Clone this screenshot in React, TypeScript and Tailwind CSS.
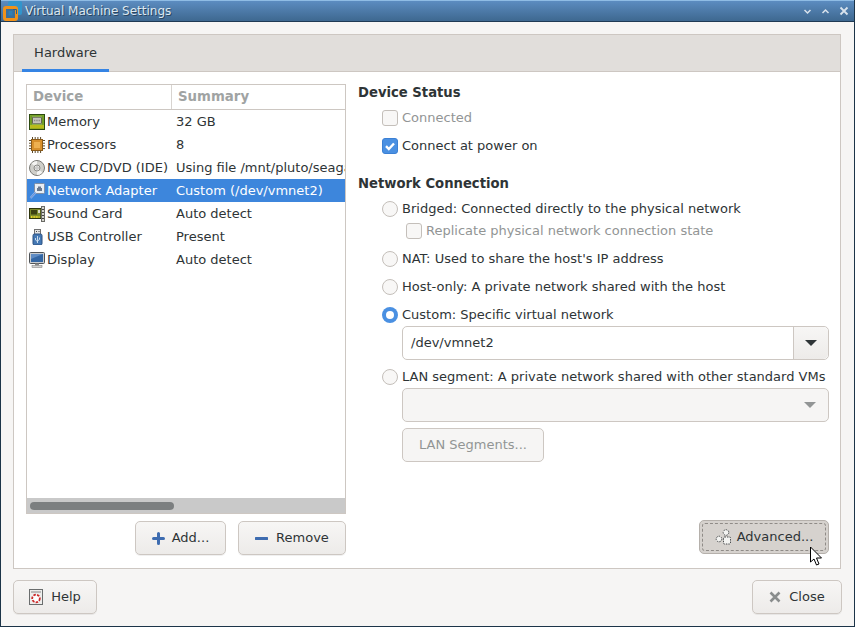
import React from "react";

const Logo = () => (
  <svg width="20" height="20" viewBox="0 0 20 20" className="shrink-0">
    <rect x="6" y="0" width="14" height="14" rx="2" fill="#3295cc" />
    <rect x="2.500" y="6.500" width="12" height="12" rx="1.500" fill="#3a6f9c" stroke="#f0921a" strokeWidth="3" />
    <rect x="6.500" y="10" width="4" height="4.500" fill="#2f7fb6" />
    <path d="M11 8.500h3.500V13" fill="none" stroke="#2a5f8a" strokeWidth="1" />
  </svg>
);

const MemoryIcon = () => (
  <svg width="16" height="16" viewBox="0 0 16 16">
    <rect x="0.500" y="0.500" width="15" height="15" fill="#7ba82c" stroke="#2c4a10" />
    <rect x="1.500" y="1.500" width="13" height="9" fill="#6f9a24" />
    <rect x="1.500" y="11" width="13" height="3.500" fill="#e9dc22" />
    <path d="M3 11v4M5 11v4M7 11v4M9 11v4M11 11v4M13 11v4" stroke="#6f8a12" strokeWidth="0.800" />
    <rect x="3.500" y="3.500" width="9" height="6" fill="#c4c4bc" stroke="#4a4a44" strokeWidth="0.700" />
    <path d="M4 2.500v1M6 2.500v1M8 2.500v1M10 2.500v1M12 2.500v1M4 9.500v1M6 9.500v1M8 9.500v1M10 9.500v1M12 9.500v1" stroke="#e6e6de" strokeWidth="0.800" />
    <path d="M5 6.500h6" stroke="#8a8a82" strokeWidth="1.400" strokeDasharray="1 0.700" />
  </svg>
);
const CpuIcon = () => (
  <svg width="16" height="16" viewBox="0 0 16 16">
    <path d="M3.500 0v16M6.200 0v16M8.900 0v16M11.600 0v16M0 3.500h16M0 6.200h16M0 8.900h16M0 11.600h16" stroke="#5c4a2a" strokeWidth="1" />
    <rect x="2" y="2" width="12" height="12" fill="#8a5a18" />
    <rect x="3" y="3" width="10" height="10" fill="#d8902c" />
    <rect x="5" y="5" width="6" height="6" fill="#eeb050" />
  </svg>
);
const CdIcon = () => (
  <svg width="16" height="16" viewBox="0 0 16 16">
    <circle cx="8" cy="8" r="7.500" fill="#cfcfca" stroke="#7a7a76" />
    <path d="M8 8 2.500 3.500A7 7 0 0 1 8 1Z" fill="#f4f4f2" />
    <path d="M8 8l5.500 4.500A7 7 0 0 1 8 15Z" fill="#f4f4f2" />
    <circle cx="8" cy="8" r="3" fill="#e8e8e6" stroke="#8a8a86" />
    <circle cx="8" cy="8" r="1.200" fill="#fff" stroke="#8a8a86" strokeWidth="0.600" />
  </svg>
);
const NetIcon = () => (
  <svg width="16" height="16" viewBox="0 0 16 16">
    <rect x="5.500" y="0.500" width="10" height="10" rx="1" fill="#e8edf4" stroke="#7f8ea4" />
    <path d="M8 8V5h1V3.500h3V5h1v3Z" fill="#69788e" />
    <path d="M6.500 9.500 1.500 15" stroke="#8fb4ee" strokeWidth="2.200" />
    <path d="M6.500 9.500 1.500 15" stroke="#5f84c4" strokeWidth="0.800" />
  </svg>
);
const SoundIcon = () => (
  <svg width="16" height="16" viewBox="0 0 16 16">
    <rect x="0.500" y="2.500" width="11.500" height="10" fill="#7c8a2c" stroke="#2e340c" />
    <rect x="2" y="4" width="6" height="4.500" fill="#3c4012" />
    <rect x="9" y="4" width="2" height="3" fill="#d8d8c8" />
    <path d="M2 11h8.500" stroke="#e6d424" strokeWidth="2" strokeDasharray="1 0.600" />
    <rect x="12.500" y="0.500" width="3" height="15" fill="#d4d4cc" stroke="#6a6a66" />
    <path d="M13 3.500h2M13 6.500h2M13 9.500h2M13 12.500h2" stroke="#444" />
  </svg>
);
const UsbIcon = () => (
  <svg width="16" height="16" viewBox="0 0 16 16">
    <rect x="5.500" y="0.500" width="6" height="5" fill="#e4e4e4" stroke="#707070" />
    <path d="M7 2.500h1M9.500 2.500h1" stroke="#444" />
    <rect x="4" y="5" width="9" height="11" rx="1.500" fill="#4478b4" stroke="#2a4e7e" />
    <path d="M8.500 7v7M6.500 9v2l2 1.500M10.500 8.500v2l-2 1.500" stroke="#d4e4f4" fill="none" strokeWidth="0.900" />
  </svg>
);
const DisplayIcon = () => (
  <svg width="16" height="16" viewBox="0 0 16 16">
    <rect x="0.500" y="0.500" width="15" height="11" rx="1" fill="#c8ccd0" stroke="#4e5256" />
    <rect x="2" y="2" width="12" height="8" fill="#3366a4" />
    <path d="M2 2h12L2 7Z" fill="#5f8cc4" />
    <rect x="6" y="11.500" width="4" height="2" fill="#8a8a8a" />
    <rect x="3" y="13.500" width="10" height="2" fill="#d0d0d0" stroke="#777" strokeWidth="0.500" />
  </svg>
);

const rows = [
  { icon: <MemoryIcon />, name: "Memory", summary: "32 GB" },
  { icon: <CpuIcon />, name: "Processors", summary: "8" },
  { icon: <CdIcon />, name: "New CD/DVD (IDE)", summary: "Using file /mnt/pluto/seagate/isos/ubuntu.iso" },
  { icon: <NetIcon />, name: "Network Adapter", summary: "Custom (/dev/vmnet2)", selected: true },
  { icon: <SoundIcon />, name: "Sound Card", summary: "Auto detect" },
  { icon: <UsbIcon />, name: "USB Controller", summary: "Present" },
  { icon: <DisplayIcon />, name: "Display", summary: "Auto detect" },
];

const Btn = ({ className = "", children, disabled }: { className?: string; children: React.ReactNode; disabled?: boolean }) => (
  <button
    className={`h-[34px] flex items-center justify-center rounded-[5px] border border-[#cdc7c2] ${
      disabled ? "bg-[#f6f5f4] text-[#929595]" : "bg-gradient-to-b from-[#f7f6f5] to-[#edebe9] text-[#2e3436] shadow-[0_1px_0_rgba(0,0,0,0.06)]"
    } ${className}`}
  >
    {children}
  </button>
);

const Check = ({ checked }: { checked?: boolean }) =>
  checked ? (
    <span className="w-4 h-4 rounded-[3px] bg-[#4a90e2] border border-[#3b80d4] flex items-center justify-center shrink-0">
      <svg width="12" height="12" viewBox="0 0 12 12">
        <path d="M2 6.200 4.800 9 10 3.500" fill="none" stroke="#fff" strokeWidth="2.400" />
      </svg>
    </span>
  ) : (
    <span className="w-4 h-4 rounded-[3px] bg-[#f8f7f6] border border-[#c4bfba] shrink-0" />
  );

const Radio = ({ checked }: { checked?: boolean }) =>
  checked ? (
    <span className="w-4 h-4 rounded-full bg-[#4a90e2] flex items-center justify-center shrink-0">
      <span className="w-2 h-2 rounded-full bg-white" />
    </span>
  ) : (
    <span className="w-4 h-4 rounded-full bg-[#f8f7f6] border border-[#c4bfba] shrink-0" />
  );

const Option = ({ control, label, dim, className = "" }: { control: React.ReactNode; label: string; dim?: boolean; className?: string }) => (
  <div className={`flex items-center gap-1 h-5 whitespace-nowrap ${dim ? "text-[#929595]" : "text-[#2e3436]"} ${className}`}>
    {control}
    <span>{label}</span>
  </div>
);

export default function App() {
  return (
    <div
      className="relative w-[855px] h-[627px] overflow-hidden flex flex-col border-x border-b border-x-[#1c3448] border-b-[#1c3448] bg-[#f6f5f4] text-[13px] text-[#2e3436]"
      style={{ fontFamily: '"DejaVu Sans", sans-serif' }}
    >
      <div className="h-[22px] -mx-px shrink-0 flex items-center pl-[2px] pr-[6px] border-t border-t-[#8fbce4] border-b border-b-[#1f3a54] bg-gradient-to-b from-[#5c8cc0] to-[#3e6890] text-[12px] text-[#dce8f2]">
        <Logo />
        <span className="ml-[3px] [text-shadow:1px_1px_0_#2a4560]">Virtual Machine Settings</span>
        <div className="ml-auto flex items-center gap-[9px]">
          <svg width="9" height="9" viewBox="0 0 9 9"><path d="M1.500 3 4.500 6 7.500 3" fill="none" stroke="#d8e2ec" strokeWidth="1.500" /></svg>
          <svg width="9" height="9" viewBox="0 0 9 9"><path d="M1.500 6 4.500 3 7.500 6" fill="none" stroke="#d8e2ec" strokeWidth="1.500" /></svg>
          <svg width="10" height="10" viewBox="0 0 10 10"><path d="M1.500 1.500 8.500 8.500M8.500 1.500 1.500 8.500" fill="none" stroke="#d8e2ec" strokeWidth="1.800" /></svg>
        </div>
      </div>

      <div className="flex-1 flex flex-col px-3 pt-3 pb-3">
        <div className="h-[535px] w-[828px] shrink-0 border border-[#cdc7c2] bg-white flex flex-col">
          <div className="h-[37px] shrink-0 bg-[#e1dedb] border-b border-[#cdc7c2] pl-2 flex">
            <div className="w-[87px] h-[37px] border-b-[3px] border-[#3584e4] flex items-center justify-center pt-[1px]">Hardware</div>
          </div>

          <div className="flex-1 flex pl-3 pt-3 pr-3 pb-3 gap-3">
            <div className="w-[320px] shrink-0 flex flex-col">
              <div className="h-[430px] border border-[#cdc7c2] flex flex-col overflow-hidden">
                <div className="h-[25px] shrink-0 border-b border-[#cdc7c2] flex font-bold text-[13.333px] text-[#a0a3a3] items-center">
                  <div className="w-[145px] h-full pl-[6px] border-r border-[#d8d4d0] flex items-center">Device</div>
                  <div className="pl-[6px]">Summary</div>
                </div>
                <div className="flex-1">
                  {rows.map((r) => (
                    <div key={r.name} className={`h-[23px] flex items-center whitespace-nowrap overflow-hidden ${r.selected ? "bg-[#3d86dc] text-white" : "text-[#2e3436]"}`}>
                      <div className="w-[149px] shrink-0 flex items-center pl-[2px] gap-[2px]">
                        {r.icon}
                        <span>{r.name}</span>
                      </div>
                      <span>{r.summary}</span>
                    </div>
                  ))}
                </div>
                <div className="h-[15px] shrink-0 bg-[#c9c9c9] flex items-center pl-[3px]">
                  <div className="w-[144px] h-2 rounded-full bg-[#7c7f80]" />
                </div>
              </div>
              <div className="flex justify-end gap-3 mt-[7px]">
                <Btn className="w-[91px] gap-[7px]">
                  <svg width="13" height="13" viewBox="0 0 13 13"><path d="M6.500 1.500v10M1.500 6.500h10" stroke="#3e6cb0" strokeWidth="3" strokeLinecap="round" /></svg>
                  Add...
                </Btn>
                <Btn className="w-[108px] gap-[8px]">
                  <svg width="13" height="13" viewBox="0 0 13 13"><path d="M1 6.500h11" stroke="#3e6cb0" strokeWidth="3" strokeLinecap="round" /></svg>
                  Remove
                </Btn>
              </div>
            </div>

            <div className="flex-1 min-w-0 flex flex-col -mt-[2px] relative">
              <div className="font-bold text-[13.2px] h-5 pt-px flex items-center">Device Status</div>
              <Option className="ml-6 mt-[6px]" dim control={<Check />} label="Connected" />
              <Option className="ml-6 mt-2" control={<Check checked />} label="Connect at power on" />
              <div className="font-bold text-[13.2px] h-5 flex items-center mt-[18px]">Network Connection</div>
              <Option className="ml-6 mt-[5px]" control={<Radio />} label="Bridged: Connected directly to the physical network" />
              <Option className="ml-12 mt-[2px]" dim control={<Check />} label="Replicate physical network connection state" />
              <Option className="ml-6 mt-2" control={<Radio />} label="NAT: Used to share the host's IP address" />
              <Option className="ml-6 mt-2" control={<Radio />} label="Host-only: A private network shared with the host" />
              <Option className="ml-6 mt-2" control={<Radio checked />} label="Custom: Specific virtual network" />
              <div className="ml-[44px] mt-[1px] h-[34px] w-[427px] rounded-[5px] border border-[#cdc7c2] flex items-center bg-white">
                <span className="pl-2 flex-1">/dev/vmnet2</span>
                <div className="w-[35px] h-full border-l border-[#cdc7c2] rounded-r-[5px] bg-gradient-to-b from-[#f7f6f5] to-[#edebe9] flex items-center justify-center">
                  <svg width="12" height="6" viewBox="0 0 12 6"><path d="M0 0h12L6 6Z" fill="#2e3436" /></svg>
                </div>
              </div>
              <Option className="ml-6 mt-[7px]" control={<Radio />} label="LAN segment: A private network shared with other standard VMs" />
              <div className="ml-[44px] mt-[1px] h-[34px] w-[427px] rounded-[5px] border border-[#cdc7c2] bg-[#f6f5f4] flex items-center justify-end pr-[12px]">
                <svg width="12" height="6" viewBox="0 0 12 6"><path d="M0 0h12L6 6Z" fill="#929595" /></svg>
              </div>
              <Btn disabled className="ml-[44px] mt-[6px] w-[142px]">LAN Segments...</Btn>

              <button className="absolute -right-px top-[438px] w-[130px] h-[34px] rounded-[5px] border border-[#b5b0ab] bg-[#d6d2ce] flex items-center justify-center gap-[4px] text-[#2e3436]">
                <span className="absolute inset-[2px] rounded-[3px] border border-dashed border-[#8f8b87]" />
                <svg width="18" height="18" viewBox="0 0 18 18" fill="#f4f4f2" stroke="#4a4d4f" strokeWidth="1">
                  <circle cx="11" cy="4.500" r="2.800" strokeDasharray="1.500 1" />
                  <circle cx="4" cy="11" r="2.800" strokeDasharray="1.500 1" />
                  <rect x="8.500" y="9" width="7" height="7" rx="1" strokeDasharray="1.500 1" />
                </svg>
                Advanced...
              </button>
            </div>
          </div>
        </div>

        <div className="flex justify-between mt-[11px] w-[829px]">
          <Btn className="w-[84px] gap-[8px]">
            <svg width="14" height="16" viewBox="0 0 14 16">
              <rect x="0.500" y="0.500" width="13" height="15" fill="#eeeeec" stroke="#6a6d6d" />
              <path d="M2 3h10" stroke="#888" />
              <circle cx="7" cy="9.500" r="3.800" fill="#fff" stroke="#cc2a2a" strokeWidth="1.800" strokeDasharray="2.500 1.200" />
            </svg>
            Help
          </Btn>
          <Btn className="w-[90px] gap-[8px]">
            <svg width="12" height="12" viewBox="0 0 12 12"><path d="M1.500 1.500 10.500 10.500M10.500 1.500 1.500 10.500" stroke="#8a8d8d" strokeWidth="2.600" /></svg>
            Close
          </Btn>
        </div>
      </div>

      <svg className="absolute left-[808px] top-[546px]" width="14" height="21" viewBox="0 0 14 21">
        <path d="M1.500 1v15l3.500-3 2.500 6 2.500-1-2.500-6h5Z" fill="#fff" stroke="#000" strokeWidth="1" />
      </svg>
    </div>
  );
}
